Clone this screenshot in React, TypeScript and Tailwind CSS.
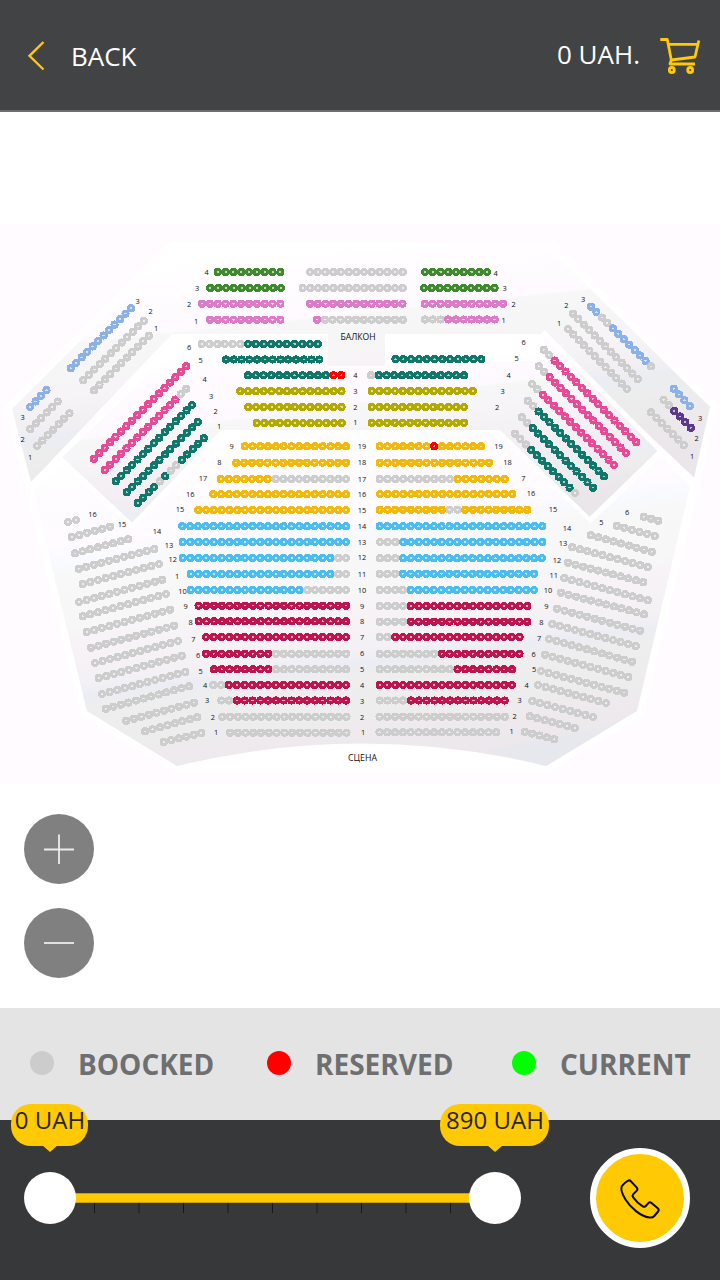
import React from "react";

type Run = [string, number];
type Row = [number, number, number, number, Run[]];
type Label = [string, number, number];

const G = "#cdcdcd";
const GREEN = "#3f8a2e";
const PINK = "#de7bc8";
const TEAL = "#11776a";
const RED = "#ff0000";
const OLIVE = "#b3aa00";
const BLUE = "#8bb1e8";
const ROSE = "#e84a96";
const PURPLE = "#5b3a8c";
const GOLD = "#f0b90b";
const SKY = "#4bbdf0";
const WINE = "#bd1550";

const balconyRows: Row[] = [
  [217.7, 272, 280.4, 272, [[GREEN, 9]]],
  [210.3, 288, 281, 288, [[GREEN, 10]]],
  [202, 303.7, 280.4, 303.7, [[PINK, 11]]],
  [210, 319.7, 280.4, 319.7, [[PINK, 10]]],
  [310, 272, 402.7, 272, [[G, 13]]],
  [302.7, 288, 402.7, 288, [[G, 14]]],
  [310, 303.7, 402.5, 303.7, [[PINK, 13]]],
  [317, 319.7, 402.7, 319.7, [[PINK, 1], [G, 11]]],
  [425, 272, 487, 272, [[GREEN, 9]]],
  [424, 288, 494.5, 288, [[GREEN, 10]]],
  [424.7, 303.7, 503, 303.7, [[PINK, 11]]],
  [425, 319.5, 494.7, 319.5, [[G, 3], [PINK, 7]]],
  [201.7, 344, 317.7, 344, [[G, 6], [TEAL, 10]]],
  [226, 359.5, 319.3, 359.5, [[TEAL, 13]]],
  [248, 375.3, 341.3, 375.3, [[TEAL, 11], [RED, 2]]],
  [240.3, 391.2, 341.5, 391.2, [[OLIVE, 14]]],
  [248.3, 407, 341.5, 407, [[OLIVE, 13]]],
  [256.7, 423, 341.7, 423, [[OLIVE, 12]]],
  [395.5, 359.2, 481.3, 359.2, [[TEAL, 12]]],
  [371, 375.3, 464, 375.3, [[G, 1], [TEAL, 12]]],
  [371.7, 391, 472.7, 391, [[OLIVE, 14]]],
  [371.7, 407, 464, 407, [[OLIVE, 13]]],
  [371.7, 422.8, 464, 422.8, [[OLIVE, 13]]],
];

const wingRows: Row[] = [
  [70.7, 368.3, 131, 308.2, [[BLUE, 12]]],
  [83.3, 380.3, 143.7, 321, [[G, 12]]],
  [94, 390.3, 148.7, 335.7, [[G, 11]]],
  [30, 407, 46.5, 390.2, [[BLUE, 4]]],
  [30.3, 429, 57.7, 401.5, [[G, 6]]],
  [37, 446, 69.5, 413.3, [[G, 7]]],
  [93.7, 458.7, 186.3, 366.3, [[ROSE, 18]]],
  [104.7, 470, 186.3, 388.7, [[ROSE, 14], [G, 2]]],
  [115.7, 481.3, 192, 405, [[TEAL, 15]]],
  [126.7, 492.3, 197.7, 422, [[TEAL, 14]]],
  [137.7, 503, 203.7, 438.3, [[TEAL, 4], [G, 1], [TEAL, 1], [G, 2], [TEAL, 5]]],
  [591, 306.7, 651, 366.3, [[BLUE, 2], [G, 2], [BLUE, 7], [G, 1]]],
  [573, 313.7, 637.8, 379, [[G, 13]]],
  [568, 329, 627, 389, [[G, 12]]],
  [673.7, 388.7, 689.8, 406, [[BLUE, 4]]],
  [663.5, 399.7, 690.7, 427.7, [[G, 2], [PURPLE, 4]]],
  [651, 412.3, 683.8, 445, [[G, 7]]],
  [543.7, 349.7, 636.3, 442.3, [[G, 2], [ROSE, 16]]],
  [538.7, 366.3, 626, 453, [[G, 2], [ROSE, 15]]],
  [532, 384, 614, 465, [[G, 2], [ROSE, 14]]],
  [527.7, 400.7, 604, 476.3, [[G, 2], [TEAL, 13]]],
  [521.7, 417.3, 593, 487.7, [[G, 2], [TEAL, 12]]],
  [515, 433.7, 575, 493, [[G, 3], [TEAL, 8], [G, 1]]],
];

const stallRows: Row[] = [
  [244.7, 446.3, 346, 446.3, [[GOLD, 14]]],
  [236.3, 462.7, 346, 462.7, [[GOLD, 15]]],
  [220.7, 479, 346, 479, [[GOLD, 7], [G, 10]]],
  [213.3, 494.2, 346, 494.2, [[GOLD, 18]]],
  [198.3, 510, 346, 510, [[GOLD, 20]]],
  [182.3, 526.2, 346, 526.2, [[SKY, 22]]],
  [182.7, 542, 346, 542, [[SKY, 22]]],
  [182.7, 558, 346, 558, [[SKY, 20], [G, 2]]],
  [190.7, 574, 346, 574, [[SKY, 19], [G, 2]]],
  [190.7, 590, 346, 590, [[SKY, 15], [G, 6]]],
  [198.5, 605.7, 346, 605.7, [[WINE, 20]]],
  [198.7, 621.3, 346, 621.3, [[WINE, 20]]],
  [206, 637, 346, 637, [[WINE, 19]]],
  [206, 653.8, 346, 653.8, [[WINE, 9], [G, 10]]],
  [214, 669.3, 346, 669.3, [[WINE, 8], [G, 10]]],
  [213.3, 685, 346, 685, [[G, 2], [WINE, 16]]],
  [221.3, 700.5, 346, 700.5, [[G, 2], [WINE, 15]]],
  [222.3, 716.8, 346.5, 716.8, [[G, 17]]],
  [230, 732.7, 346.5, 732.7, [[G, 16]]],
  [379.7, 446.3, 481, 446.3, [[GOLD, 7], [RED, 1], [GOLD, 6]]],
  [379.7, 462.7, 489, 462.7, [[GOLD, 15]]],
  [379.7, 479, 504.7, 479, [[G, 10], [GOLD, 7]]],
  [380, 494, 512.2, 494, [[GOLD, 18]]],
  [379.7, 509.7, 527.3, 509.7, [[GOLD, 9], [G, 2], [GOLD, 9]]],
  [379.7, 526.2, 542.3, 526.2, [[SKY, 22]]],
  [380, 542, 542.3, 542, [[G, 3], [SKY, 19]]],
  [380, 558.2, 541.8, 558.2, [[G, 3], [SKY, 19]]],
  [379.7, 573.8, 534, 573.8, [[G, 3], [SKY, 18]]],
  [379.7, 590, 534, 590, [[G, 4], [SKY, 17]]],
  [379.7, 606, 527.3, 606, [[G, 4], [WINE, 16]]],
  [379.7, 621.7, 527.3, 621.7, [[G, 4], [WINE, 16]]],
  [379.7, 637, 519.5, 637, [[G, 2], [WINE, 17]]],
  [379.7, 653.8, 519.5, 653.8, [[G, 8], [WINE, 11]]],
  [379.7, 669.3, 512, 669.3, [[G, 10], [WINE, 8]]],
  [379.7, 685, 512, 685, [[WINE, 18]]],
  [379.7, 700.5, 504.7, 700.5, [[G, 4], [WINE, 13]]],
  [379.5, 716.7, 504.7, 716.7, [[G, 17]]],
  [379.5, 732.3, 496.3, 732.3, [[G, 16]]],
];

const sideRows: Row[] = [
  [68, 522, 76, 520, [[G, 2]]],
  [71.7, 537, 110, 526.7, [[G, 6]]],
  [75, 553.3, 128.3, 539.3, [[G, 8]]],
  [78.7, 568.7, 154.3, 549, [[G, 11]]],
  [82.7, 584, 159, 564, [[G, 11]]],
  [79, 602, 162.3, 579.7, [[G, 12]]],
  [82.7, 616.3, 166, 594, [[G, 12]]],
  [86.7, 632, 170, 609.7, [[G, 12]]],
  [91, 647.7, 174, 625.7, [[G, 12]]],
  [95, 663, 178, 641, [[G, 12]]],
  [98.7, 678, 181.7, 655.7, [[G, 12]]],
  [102, 694, 185.3, 672, [[G, 12]]],
  [105.7, 708.7, 189, 686.3, [[G, 12]]],
  [126.3, 720.7, 194, 702.7, [[G, 10]]],
  [145, 731.3, 197.3, 717.3, [[G, 8]]],
  [163.7, 742, 201.3, 733, [[G, 6]]],
  [643.7, 516.7, 658.3, 520.7, [[G, 3]]],
  [616.7, 525.7, 654.7, 536, [[G, 6]]],
  [590.7, 535.3, 651.7, 551.7, [[G, 9]]],
  [572.3, 547.3, 647.7, 567, [[G, 11]]],
  [568, 562.7, 643.3, 582.3, [[G, 11]]],
  [564.3, 578, 647.7, 600.3, [[G, 12]]],
  [561, 592.7, 644, 614.3, [[G, 12]]],
  [557, 608.7, 640, 630.7, [[G, 12]]],
  [552.3, 624, 635.7, 646, [[G, 12]]],
  [549, 639, 632, 661.7, [[G, 12]]],
  [545, 654.7, 628.3, 677, [[G, 12]]],
  [541, 671, 624.3, 692.7, [[G, 12]]],
  [538, 685, 606, 703, [[G, 10]]],
  [532.3, 701, 593, 717, [[G, 9]]],
  [529.7, 716.3, 574.7, 728, [[G, 7]]],
  [524.7, 731.7, 554.3, 739.3, [[G, 5]]],
];

const labels: Label[] = [
  ["4", 206.5, 272], ["3", 197, 288], ["2", 189, 304], ["1", 196, 321.7],
  ["4", 495.5, 273], ["3", 504.5, 288], ["2", 513.5, 304], ["1", 503.5, 320],
  ["6", 189, 347], ["5", 200.5, 360], ["4", 204.5, 379], ["3", 211, 396], ["2", 215.5, 411], ["1", 219, 426.5],
  ["6", 523.5, 342], ["5", 516.5, 358.5], ["4", 508.5, 375], ["3", 502.5, 391], ["2", 497, 407.5],
  ["4", 355.3, 374.8], ["3", 355.3, 391.3], ["2", 355.3, 407.3], ["1", 355.3, 422.7],
  ["3", 137.5, 301], ["2", 150.5, 311.7], ["1", 156, 328.5], ["3", 22.7, 417.5], ["2", 22.7, 439.5], ["1", 30, 457],
  ["3", 583, 299.5], ["2", 566.3, 305.7], ["1", 559, 323], ["3", 700, 418], ["2", 696.5, 438.3], ["1", 692, 456.5],
  ["9", 231.5, 446], ["8", 219.3, 462], ["17", 203, 478.5], ["16", 190.3, 494], ["15", 180, 509.5],
  ["14", 157, 531.3], ["13", 169, 545], ["12", 172.7, 559.5], ["1", 177, 576], ["10", 182.5, 591],
  ["9", 185.5, 606.5], ["8", 190.5, 622], ["7", 193.3, 639.5], ["6", 198, 655.5], ["5", 200.5, 671.5],
  ["4", 205, 685], ["3", 207, 700.5], ["2", 212.8, 717], ["1", 216, 732.7], ["16", 92.5, 514.7], ["15", 122, 524.7],
  ["19", 498.5, 446], ["18", 507.5, 462], ["7", 523.3, 478], ["16", 531, 493.5], ["15", 553, 509],
  ["14", 567, 528.5], ["13", 563, 543.5], ["12", 557, 560], ["11", 553.7, 575.5], ["10", 548, 590],
  ["9", 546.3, 606.7], ["8", 541.3, 622.5], ["7", 539, 638.3], ["6", 533.5, 654], ["5", 534, 669.7],
  ["4", 526.5, 685], ["3", 519.5, 700.7], ["2", 514.5, 716.7], ["1", 511.5, 731.7], ["6", 627, 512], ["5", 601.3, 522],
  ["19", 362, 446.3], ["18", 362, 462.5], ["17", 362, 479], ["16", 362, 494.3], ["15", 362, 510],
  ["14", 362, 526.3], ["13", 362, 542], ["12", 362, 557.7], ["11", 362, 574.3], ["10", 362, 590],
  ["9", 362, 606], ["8", 362, 621.7], ["7", 362, 637.3], ["6", 362, 653.7], ["5", 362, 669.3],
  ["4", 362, 685], ["3", 362, 701], ["2", 362, 717], ["1", 363, 732.7],
];

function SeatRow({ row }: { row: Row }) {
  const [x1, y1, x2, y2, runs] = row;
  const colors = runs.flatMap(([color, n]) => Array<string>(n).fill(color));
  const last = Math.max(1, colors.length - 1);
  return (
    <g shapeRendering="crispEdges">
      {colors.map((color, i) => {
        const x = x1 + ((x2 - x1) * i) / last;
        const y = y1 + ((y2 - y1) * i) / last;
        return (
          <g key={i}>
            <circle cx={x} cy={y} r={4.1} fill={color} />
            <ellipse cx={x} cy={y} rx={1.25} ry={0.85} fill="#fff" fillOpacity={0.65} />
          </g>
        );
      })}
    </g>
  );
}

function HallMap() {
  const rows = [...balconyRows, ...wingRows, ...stallRows, ...sideRows];
  return (
    <svg width="720" height="560" viewBox="0 224 720 560" className="block">
      <defs>
        <linearGradient id="upper" gradientUnits="userSpaceOnUse" x1="350" y1="245" x2="375" y2="485">
          <stop offset="0" stopColor="#ffffff" />
          <stop offset="0.1" stopColor="#fffdff" />
          <stop offset="0.28" stopColor="#fefaff" />
          <stop offset="0.29" stopColor="#f7f7f7" />
          <stop offset="0.5" stopColor="#f6f4f6" />
          <stop offset="0.62" stopColor="#f2eff3" />
          <stop offset="0.66" stopColor="#ebedf3" />
          <stop offset="0.74" stopColor="#ededed" />
          <stop offset="1" stopColor="#ebe6ea" />
        </linearGradient>
        <linearGradient id="wings" gradientUnits="userSpaceOnUse" x1="350" y1="335" x2="375" y2="520">
          <stop offset="0" stopColor="#ffffff" />
          <stop offset="0.1" stopColor="#fffbff" />
          <stop offset="0.36" stopColor="#fef9fe" />
          <stop offset="0.37" stopColor="#f7f7f7" />
          <stop offset="0.5" stopColor="#f6f4f7" />
          <stop offset="0.75" stopColor="#f2edf2" />
          <stop offset="0.8" stopColor="#eceef4" />
          <stop offset="0.86" stopColor="#eeeeee" />
          <stop offset="1" stopColor="#ebe6ea" />
        </linearGradient>
        <linearGradient id="stalls" gradientUnits="userSpaceOnUse" x1="340" y1="430" x2="380" y2="770">
          <stop offset="0" stopColor="#ffffff" />
          <stop offset="0.1" stopColor="#fefcfe" />
          <stop offset="0.24" stopColor="#fffbff" />
          <stop offset="0.29" stopColor="#f8faff" />
          <stop offset="0.34" stopColor="#f8f8f8" />
          <stop offset="0.48" stopColor="#f7f7f7" />
          <stop offset="0.52" stopColor="#f7f3f7" />
          <stop offset="0.64" stopColor="#f4f1f5" />
          <stop offset="0.68" stopColor="#ecedf4" />
          <stop offset="0.73" stopColor="#eeeeee" />
          <stop offset="0.83" stopColor="#ededed" />
          <stop offset="0.87" stopColor="#efeaed" />
          <stop offset="1" stopColor="#ece7ea" />
        </linearGradient>
      </defs>
      <rect x="0" y="224" width="720" height="560" fill="#fffbff" />
      <path
        d="M172 249 L550 249 L710 407 L694 478 L637 711 L545 766 Q362 722 177 766 L87 711 L31 480 L12 409 Z"
        fill="#fff"
        stroke="#fff"
        strokeWidth="14"
      />
      <path d="M175 766 Q362 722 547 766 L547 774 L175 774 Z" fill="#fff" />
      <path
        d="M172 249 L550 249 L710 407 L694 478 L543 334 L385 334 L385 366 L328 366 L328 334 L172 334 L31 482 L12 409 Z"
        fill="url(#upper)"
      />
      <path
        d="M180 345 L328 345 L328 366 L385 366 L385 345 L546 338 L658 451 L590 517 L500 430 L221 430 L132 523 L62 457 Z"
        fill="url(#wings)"
      />
      <path d="M172 334 L328 334 L328 363 L199 365 L182 344 Z" fill="#fff" />
      <path d="M385 334 L543 334 L548 361 L385 363 Z" fill="#fff" />
      <path
        d="M33 490 L62 464 L132 529 L223 434 L498 434 L590 523 L662 456 L690 487 L637 711 L546 766 Q362 721 177 766 L87 711 Z"
        fill="url(#stalls)"
      />
      <path d="M486 750 L612 726 L546 766 Z" fill="#e5e9ed" fillOpacity="0.8" />
      <path
        d="M543 332 L661 451 L590 520 M58 457 L132 526 L223 433 M694 481 L658 447 M35 482 L170 341"
        fill="none"
        stroke="#fff"
        strokeWidth="5"
      />
      {rows.map((row, i) => (
        <SeatRow key={i} row={row} />
      ))}
      <g fontFamily="'Open Sans', 'Noto Sans', sans-serif" fontSize="7.4" fill="#111" textAnchor="middle">
        {labels.map(([text, x, y], i) => (
          <text key={i} x={x} y={y + 2.7}>
            {text}
          </text>
        ))}
        <text x="358" y="340" fontSize="9.2" textLength="35" lengthAdjust="spacingAndGlyphs">
          БАЛКОН
        </text>
        <text x="362.5" y="760.5" fontSize="9.2" textLength="29" lengthAdjust="spacingAndGlyphs">
          СЦЕНА
        </text>
      </g>
    </svg>
  );
}

function CartIcon() {
  return (
    <svg width="42" height="38" viewBox="659 37 42 38" fill="none" stroke="#ffc903" strokeWidth="2.8" className="block">
      <path d="M660.3 39.5 H667.3 L671.3 60 L670 64 H695" strokeLinejoin="round" />
      <path d="M667.5 44.3 H697.5 M698.8 40.5 L695 57 L671.5 60" strokeLinejoin="round" />
      <circle cx="671.8" cy="70" r="2.5" />
      <circle cx="690.2" cy="70" r="2.5" />
    </svg>
  );
}

function ZoomButton({ plus }: { plus?: boolean }) {
  return (
    <button className="flex size-[70px] items-center justify-center rounded-full bg-[#808080]">
      <svg width="30" height="30" viewBox="0 0 30 30" stroke="#ececec" strokeWidth="1.8" className="block">
        <path d={plus ? "M0 15.5 H30 M15 0.5 V30" : "M0 15 H30"} />
      </svg>
    </button>
  );
}

function Bubble({ text, box }: { text: string; box: string }) {
  return (
    <div className={`absolute flex h-[42px] justify-center rounded-[20px] bg-[#ffc903] ${box}`}>
      <span className="whitespace-nowrap pl-px text-2xl leading-8 text-[#252525]">{text}</span>
      <svg width="18" height="8" viewBox="0 0 18 8" className="absolute top-[41px] left-1/2 -ml-[9px] block">
        <path d="M1 0 H17 L9 7 Z" fill="#ffc903" />
      </svg>
    </div>
  );
}

function PriceSlider() {
  return (
    <div className="relative mt-[52px] flex h-[52px] w-[497px] items-center">
      <div className="z-10 size-[52px] shrink-0 rounded-full bg-white" />
      <div className="-mx-2 h-[10px] flex-1 border-y border-[#c59f1d] bg-[#ffc903]" />
      <div className="z-10 size-[52px] shrink-0 rounded-full bg-white" />
      <svg width="400" height="10" viewBox="0 0 400 10" className="absolute top-[31px] left-[48px] block">
        <path
          d="M22.5 0 V10 M67 0 V10 M111.5 0 V10 M156 0 V10 M200.5 0 V10 M245 0 V10 M289.5 0 V10 M334 0 V10 M378.5 0 V10"
          stroke="#17181a"
          strokeWidth="1"
        />
      </svg>
      <Bubble text="0 UAH" box="left-[-13px] top-[-68px] w-[77px]" />
      <Bubble text="890 UAH" box="left-[416px] top-[-68px] w-[109px]" />
    </div>
  );
}

export default function App() {
  return (
    <div className="flex h-[1280px] w-[720px] flex-col overflow-hidden bg-white font-['Open_Sans','Noto_Sans',sans-serif]">
      <header className="flex h-28 shrink-0 items-start justify-between border-b-2 border-[#6c6d6f] bg-[#424345] pr-[19px] pl-[27px] text-[26px] leading-9 text-white">
        <div className="flex pt-[38px]">
          <svg width="18" height="32" viewBox="0 0 18 32" fill="none" className="mt-px block">
            <path d="M16.5 3 L2.5 16.8 L16.5 30.5" stroke="#ffc903" strokeWidth="2.4" />
          </svg>
          <span className="ml-[26px]">BACK</span>
        </div>
        <div className="flex pt-9">
          <span className="mr-[19px]">0 UAH.</span>
          <div className="pt-px">
            <CartIcon />
          </div>
        </div>
      </header>

      <main className="flex h-[896px] shrink-0 flex-col pt-28">
        <HallMap />
        <div className="flex flex-col gap-6 pt-[30px] pl-6">
          <ZoomButton plus />
          <ZoomButton />
        </div>
      </main>

      <section className="flex h-28 shrink-0 items-center bg-[#e4e4e4] pb-0.5 text-[28px] font-bold text-[#6e6f71]">
        <div className="flex w-[237px] items-center gap-6 pl-[30px]">
          <span className="size-6 shrink-0 rounded-full bg-[#cccccc]" />
          <span className="pt-px">BOOCKED</span>
        </div>
        <div className="flex w-[245px] items-center gap-6 pl-[30px]">
          <span className="size-6 shrink-0 rounded-full bg-[#ff0000]" />
          <span className="pt-px">RESERVED</span>
        </div>
        <div className="flex items-center gap-6 pl-[30px]">
          <span className="size-6 shrink-0 rounded-full bg-[#00ff00]" />
          <span className="pt-px">CURRENT</span>
        </div>
      </section>

      <footer className="flex h-40 shrink-0 items-start justify-between bg-[#373839] pr-[30px] pl-6">
        <PriceSlider />
        <button className="mt-7 flex size-[100px] items-center justify-center rounded-full border-[6px] border-white bg-[#ffc903]">
          <svg width="42" height="42" viewBox="619 1177 42 42" fill="none" className="block">
            <path
              d="M627.5 1181 Q629.5 1179.6 631 1181.3 L636.8 1187.6 Q638.2 1189.3 636.6 1190.9 L633.2 1194.2 Q632 1195.6 633.2 1197.3 Q637.2 1203 642.8 1206.4 Q644.5 1207.4 645.8 1206 L648.3 1203.1 Q649.8 1201.5 651.5 1202.9 L657.8 1208.2 Q659.5 1209.8 658.1 1211.5 L654.3 1216 Q652.8 1217.8 649.5 1217.5 C640.5 1216.5 630.5 1207.5 625.5 1199.5 C622 1193.5 620.8 1189 621.6 1186.8 C622.3 1184.8 625.5 1182.5 627.5 1181 Z"
              stroke="#0b0b0b"
              strokeWidth="2"
              strokeLinejoin="round"
            />
          </svg>
        </button>
      </footer>
    </div>
  );
}
